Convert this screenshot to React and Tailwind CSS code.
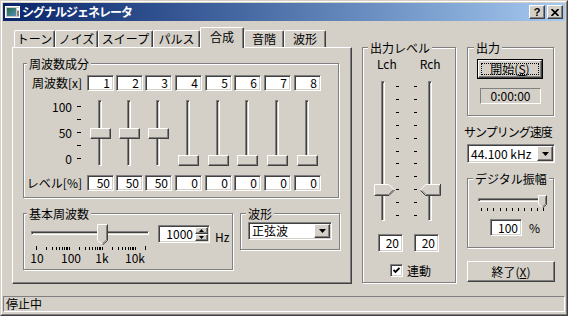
const SUNKEN =
  'border border-t-[#808080] border-l-[#808080] border-r-white border-b-white shadow-[inset_1px_1px_0_#404040,inset_-1px_-1px_0_#d4d0c8]'
const RAISED =
  'border border-t-white border-l-white border-r-[#404040] border-b-[#404040] shadow-[inset_-1px_-1px_0_#808080]'
const ETCHED = 'border border-[#808080] shadow-[inset_1px_1px_0_#fff,1px_1px_0_#fff]'
const THIN = 'border border-t-[#808080] border-l-[#808080] border-r-white border-b-white'
const TRACK =
  'border border-t-[#808080] border-l-[#808080] border-r-white border-b-white shadow-[inset_1px_1px_0_#404040]'

const tabs = [
  { label: 'トーン', w: 'w-[41px] ml-[2px]' },
  { label: 'ノイズ', w: 'w-[43px]' },
  { label: 'スイープ', w: 'w-[55px]' },
  { label: 'パルス', w: 'w-[47px]' },
  { label: '合成', w: 'w-[44px]', active: true },
  { label: '音階', w: 'w-[40px]' },
  { label: '波形', w: 'w-[42px]' },
]

const harmonics = [
  { n: 1, level: 50, gap: '' },
  { n: 2, level: 50, gap: 'ml-[2px]' },
  { n: 3, level: 50, gap: 'ml-[2px]' },
  { n: 4, level: 0, gap: 'ml-[3px]' },
  { n: 5, level: 0, gap: 'ml-[3px]' },
  { n: 6, level: 0, gap: 'ml-[2px]' },
  { n: 7, level: 0, gap: 'ml-[3px]' },
  { n: 8, level: 0, gap: 'ml-[3px]' },
]

// log scale ticks 10 Hz .. 20 kHz
const freqTicks = []
for (const d of [10, 100, 1000, 10000]) {
  for (let k = 1; k <= 9; k++) {
    if (d * k < 20000) freqTicks.push(Math.round(5 + 33 * Math.log10((d * k) / 10)))
  }
}
freqTicks.push(114)

function Group({ label, labelClass, className, children }) {
  return (
    <div className={`${ETCHED} ${className}`}>
      <div className={`-mt-[6px] w-fit bg-[#d4d0c8] px-[2px] leading-[12px] ${labelClass}`}>{label}</div>
      {children}
    </div>
  )
}

function Edit({ className, children }) {
  return (
    <div className={`${SUNKEN} flex items-center justify-end bg-white pr-[3px] ${className}`}>{children}</div>
  )
}

function Select({ value, className }) {
  return (
    <div className={`${SUNKEN} flex bg-white p-px ${className}`}>
      <div className="flex flex-1 items-center pl-[2px]">{value}</div>
      <div className={`flex w-[16px] items-center justify-center bg-[#d4d0c8] ${RAISED}`}>
        <svg width="7" height="4">
          <polygon points="0,0 7,0 3.5,4" fill="#000" />
        </svg>
      </div>
    </div>
  )
}

function DownThumb({ w, h, tip }) {
  const m = w / 2
  return (
    <svg width={w} height={h}>
      <polygon points={`0,0 ${w},0 ${w},${h - tip} ${m},${h} 0,${h - tip}`} fill="#d4d0c8" />
      <polyline points={`0.5,${h - tip} 0.5,0.5 ${w - 0.5},0.5`} stroke="#fff" fill="none" />
      <polyline points={`0.5,${h - tip + 0.5} ${m - 0.5},${h - 1}`} stroke="#fff" fill="none" />
      <polyline points={`${w - 0.5},0.5 ${w - 0.5},${h - tip + 0.5} ${m},${h}`} stroke="#404040" fill="none" />
      <polyline points={`${w - 1.5},1.5 ${w - 1.5},${h - tip} ${m},${h - 1.5}`} stroke="#808080" fill="none" />
    </svg>
  )
}

// points right
function ThumbRight() {
  return (
    <svg width="21" height="12">
      <polygon points="0,0 15,0 20.5,6 15,12 0,12" fill="#d4d0c8" />
      <polyline points="0.5,11.5 0.5,0.5 15,0.5 20,5.5" stroke="#fff" fill="none" />
      <polyline points="0.5,11.5 15,11.5 20.5,6" stroke="#404040" fill="none" />
      <polyline points="1.5,10.5 14.5,10.5 19,6" stroke="#808080" fill="none" />
    </svg>
  )
}

// points left
function ThumbLeft() {
  return (
    <svg width="21" height="12">
      <polygon points="0,6 5.5,0 21,0 21,12 5.5,12" fill="#d4d0c8" />
      <polyline points="0.5,6 5.5,0.5 20.5,0.5" stroke="#fff" fill="none" />
      <polyline points="20.5,0 20.5,11.5 5.5,11.5 0.5,6.5" stroke="#404040" fill="none" />
      <polyline points="19.5,1.5 19.5,10.5 6,10.5 2,6.5" stroke="#808080" fill="none" />
    </svg>
  )
}

function HarmonicColumn({ n, level, gap }) {
  return (
    <div className={`flex w-[27px] flex-col ${gap}`}>
      <Edit className="h-[16px]">{n}</Edit>
      <div className="relative h-[84px]">
        <div className={`ml-[11px] mt-[9px] h-[66px] w-[4px] ${TRACK}`} />
        <div
          className={`absolute left-[3px] h-[11px] w-[21px] bg-[#d4d0c8] ${RAISED}`}
          style={{ top: Math.round(64 - 0.54 * level) }}
        />
      </div>
      <Edit className="h-[16px]">{level}</Edit>
    </div>
  )
}

function TitleBar() {
  return (
    <div className="flex h-[18px] items-center bg-linear-to-r from-[#0a246a] to-[#a6caf0]">
      <svg className="ml-[2px]" width="16" height="16" viewBox="0 0 16 16">
        <defs>
          <linearGradient id="ic" x1="0" x2="1" y1="0" y2="1">
            <stop offset="0" stopColor="#1f6a45" />
            <stop offset="1" stopColor="#5a8fb8" />
          </linearGradient>
        </defs>
        <rect x="0.5" y="2.5" width="14" height="11" fill="#c8c8c8" stroke="#fff" />
        <rect x="2" y="4" width="9" height="8" fill="url(#ic)" />
        <rect x="12" y="4" width="2" height="2" fill="#fff" />
        <rect x="12" y="7" width="2" height="5" fill="#808080" />
      </svg>
      <span className="ml-px font-bold tracking-[-1px] text-white">シグナルジェネレータ</span>
      <div className={`ml-auto flex h-[14px] w-[16px] items-center justify-center bg-[#d4d0c8] ${RAISED}`}>
        <span className="font-['Liberation_Sans',sans-serif] text-[11px] font-bold leading-none">?</span>
      </div>
      <div className={`ml-[2px] mr-[2px] flex h-[14px] w-[16px] items-center justify-center bg-[#d4d0c8] ${RAISED}`}>
        <svg width="8" height="7">
          <path d="M0.5 0 L7.5 7 M7.5 0 L0.5 7" stroke="#000" strokeWidth="1.7" />
        </svg>
      </div>
    </div>
  )
}

export default function App() {
  return (
    <div className="h-[316px] w-[568px] border border-t-[#d4d0c8] border-l-[#d4d0c8] border-r-[#404040] border-b-[#404040] bg-[#d4d0c8] font-['Noto_Sans_CJK_JP','Noto_Sans',sans-serif] text-[12px] leading-[12px] text-black">
      <div className="flex h-full flex-col border border-t-white border-l-white border-r-[#808080] border-b-[#808080] p-px">
        <TitleBar />

        <div className="flex h-[275px]">
          {/* ── tab control ── */}
          <div className="ml-[9px] mt-[6px] w-[340px]">
            <div className="flex h-[20px] items-end">
              {tabs.map((t) =>
                t.active ? (
                  <div
                    key={t.label}
                    className={`relative z-10 -mb-px h-[21px] rounded-t-[2px] border-l border-r border-t border-l-white border-r-[#404040] border-t-white bg-[#d4d0c8] pt-[3px] text-center shadow-[inset_-1px_0_0_#808080] ${t.w}`}
                  >
                    {t.label}
                  </div>
                ) : (
                  <div
                    key={t.label}
                    className={`h-[17px] rounded-t-[2px] border-l border-r border-t border-l-white border-r-[#404040] border-t-white pt-[2px] text-center shadow-[inset_-1px_0_0_#808080] ${t.w}`}
                  >
                    {t.label}
                  </div>
                )
              )}
            </div>

            <div className="h-[237px] border border-t-white border-l-white border-r-[#404040] border-b-[#404040] shadow-[inset_-1px_-1px_0_#808080]">
              <Group label="周波数成分" labelClass="ml-[3px]" className="ml-[10px] mt-[15px] w-[316px] pb-[6px]">
                <div className="mt-[5px] flex">
                  <div className="flex w-[63px] flex-col">
                    <div className="flex h-[16px] items-center justify-end pr-[5px]">周波数[x]</div>
                    <div className="flex h-[84px] flex-col pt-[9px]">
                      {['100', '', '50', '', '0'].map((t, i) => (
                        <div key={i} className="flex h-[13px] items-center justify-end pr-[6px]">
                          {t && <span>{t}</span>}
                          <span className="ml-[5px] h-px w-[4px] bg-black" />
                        </div>
                      ))}
                    </div>
                    <div className="flex h-[16px] items-center justify-end pr-[5px]">レベル[%]</div>
                  </div>
                  {harmonics.map((h) => (
                    <HarmonicColumn key={h.n} {...h} />
                  ))}
                </div>
              </Group>

              <div className="ml-[10px] mt-[15px] flex items-start">
                <Group label="基本周波数" labelClass="ml-[3px]" className="w-[210px] pb-[5px]">
                  <div className="flex items-start">
                    <div className="ml-[7px] mt-[11px] flex w-[118px] flex-col">
                      <div className={`relative h-[4px] ${TRACK}`}>
                        <div className="absolute left-[65px] top-[-8px]">
                          <DownThumb w={11} h={21} tip={5} />
                        </div>
                      </div>
                      <svg className="mt-[11px]" width="118" height="4">
                        {freqTicks.map((x, i) => (
                          <rect
                            key={i}
                            x={x}
                            y={i === 0 || i === freqTicks.length - 1 ? 0 : 1}
                            width="1"
                            height={i === 0 || i === freqTicks.length - 1 ? 4 : 3}
                            fill="#000"
                          />
                        ))}
                      </svg>
                      <div className="ml-[-2px] mt-[2px] flex h-[12px] whitespace-nowrap">
                        <span className="w-[16px] text-center">10</span>
                        <span className="ml-[14px] w-[24px] text-center">100</span>
                        <span className="ml-[11px] w-[16px] text-center">1k</span>
                        <span className="ml-[13px] w-[24px] text-center">10k</span>
                      </div>
                    </div>
                    <div className={`${SUNKEN} ml-[9px] mt-[5px] flex h-[18px] w-[52px] bg-white p-px`}>
                      <div className="flex flex-1 items-center justify-end pr-[2px]">1000</div>
                      <div className="flex w-[13px] flex-col">
                        <div className={`flex flex-1 items-center justify-center bg-[#d4d0c8] ${RAISED}`}>
                          <svg width="5" height="3">
                            <polygon points="2.5,0 5,3 0,3" fill="#000" />
                          </svg>
                        </div>
                        <div className={`flex flex-1 items-center justify-center bg-[#d4d0c8] ${RAISED}`}>
                          <svg width="5" height="3">
                            <polygon points="0,0 5,0 2.5,3" fill="#000" />
                          </svg>
                        </div>
                      </div>
                    </div>
                    <span className="ml-[5px] mt-[11px]">Hz</span>
                  </div>
                </Group>

                <Group label="波形" labelClass="ml-[5px]" className="ml-[7px] w-[100px] pb-[9px]">
                  <Select value="正弦波" className="ml-[7px] mt-[2px] h-[18px] w-[84px]" />
                </Group>
              </div>
            </div>
          </div>

          {/* ── output level ── */}
          <Group label="出力レベル" labelClass="ml-[5px]" className="ml-[10px] mt-[26px] w-[94px] self-start pb-[5px]">
            <div className="mt-[4px] flex h-[12px]">
              <span className="ml-[14px]">Lch</span>
              <span className="ml-[23px]">Rch</span>
            </div>
            <div className="relative mt-[11px] flex h-[140px]">
              <div className={`ml-[18px] h-full w-[4px] ${TRACK}`} />
              <svg className="ml-[11px]" width="22" height="140">
                {Array.from({ length: 11 }).map((_, i) => (
                  <g key={i}>
                    <rect x="0" y={Math.round(5 + 12.9 * i)} width="3" height="1" fill="#000" />
                    <rect x="18" y={Math.round(5 + 12.9 * i)} width="3" height="1" fill="#000" />
                  </g>
                ))}
              </svg>
              <div className={`ml-[10px] h-full w-[4px] ${TRACK}`} />
              <div className="absolute left-[11px] top-[103px]">
                <ThumbRight />
              </div>
              <div className="absolute left-[57px] top-[103px]">
                <ThumbLeft />
              </div>
            </div>
            <div className="mt-[13px] flex">
              <Edit className="ml-[15px] h-[18px] w-[25px]">20</Edit>
              <Edit className="ml-[11px] h-[18px] w-[25px]">20</Edit>
            </div>
            <div className="mt-[12px] flex h-[13px] items-center">
              <div className={`${SUNKEN} ml-[27px] flex h-[13px] w-[13px] items-center justify-center bg-white`}>
                <svg width="7" height="7" viewBox="0 0 7 7">
                  <path d="M0.5 3 L2.5 5 L6.5 1" stroke="#000" strokeWidth="1.8" fill="none" />
                </svg>
              </div>
              <span className="ml-[4px]">連動</span>
            </div>
          </Group>

          {/* ── right column ── */}
          <div className="ml-[8px] flex w-[91px] flex-col">
            <Group label="出力" labelClass="ml-[6px]" className="ml-[3px] mt-[26px] w-[87px] pb-[11px]">
              <div className="ml-[9px] mt-[5px] h-[20px] w-[66px] border border-black">
                <div className={`flex h-full p-[2px] ${RAISED}`}>
                  <div className="flex flex-1 items-center justify-center border border-dotted border-black">
                    開始(<span className="underline">S</span>)
                  </div>
                </div>
              </div>
              <div className={`${THIN} ml-[12px] mt-[9px] flex h-[16px] w-[61px] items-center justify-center`}>
                0:00:00
              </div>
            </Group>

            <div className="mt-[10px] whitespace-nowrap tracking-[-1px]">サンプリング速度</div>
            <Select value="44.100 kHz" className="ml-[3px] mt-[6px] h-[19px] w-[88px]" />

            <Group label="デジタル振幅" labelClass="ml-[5px]" className="ml-[3px] mt-[15px] w-[87px] pb-[11px]">
              <div className={`relative ml-[10px] mt-[13px] h-[4px] w-[68px] ${TRACK}`}>
                <div className="absolute left-[59px] top-[-4px]">
                  <DownThumb w={9} h={13} tip={4} />
                </div>
              </div>
              <svg className="ml-[10px] mt-[6px]" width="68" height="3">
                {Array.from({ length: 11 }).map((_, i) => (
                  <rect key={i} x={Math.round(3 + 6.2 * i)} y="0" width="1" height="3" fill="#000" />
                ))}
              </svg>
              <div className="mt-[8px] flex items-center">
                <Edit className="ml-[22px] h-[17px] w-[32px]">100</Edit>
                <span className="ml-[7px]">%</span>
              </div>
            </Group>

            <div className={`ml-[3px] mt-[13px] flex h-[21px] w-[88px] items-center justify-center ${RAISED}`}>
              終了(<span className="underline">X</span>)
            </div>
          </div>
        </div>

        <div className={`${THIN} flex h-[16px] items-center pl-[2px]`}>停止中</div>
      </div>
    </div>
  )
}
